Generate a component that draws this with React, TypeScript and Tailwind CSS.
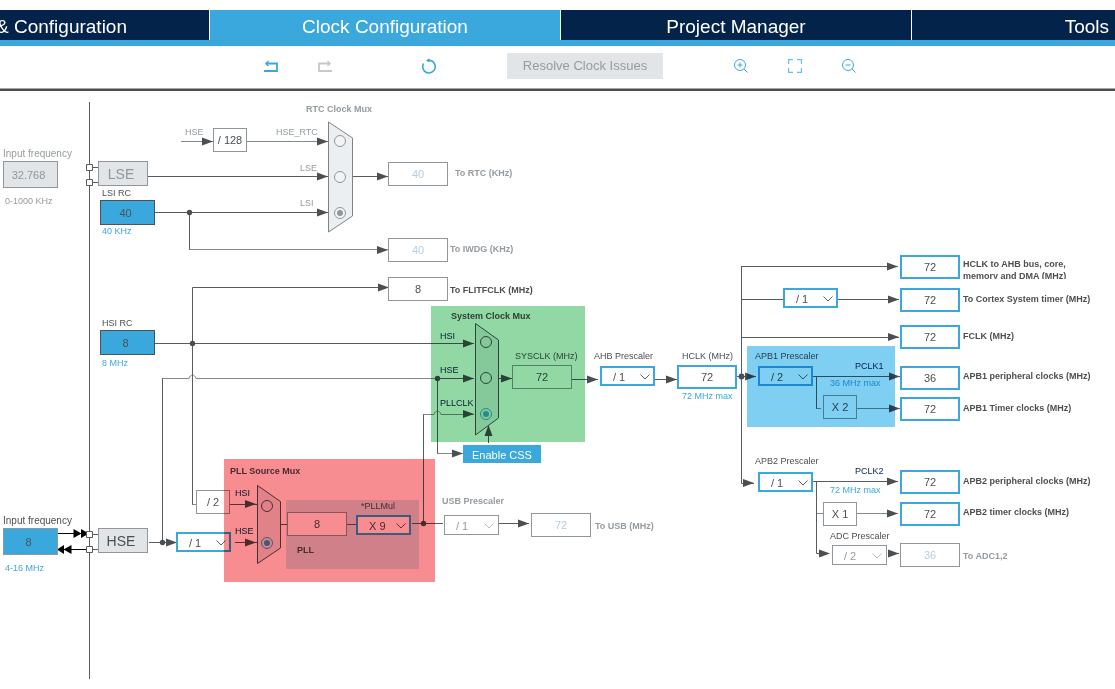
import React from "react";
import clsx from "clsx";

const TONES = {
  dark: "text-[#4b4f52]",
  gray: "text-[#959b9f]",
  blue: "text-[#3aa8dc]",
  navy: "text-[#03234b]",
};

type Tone = keyof typeof TONES;

function Label({ at, tone = "dark", bold, wide, children }: { at: string; tone?: Tone; bold?: boolean; wide?: boolean; children: React.ReactNode }) {
  return (
    <span className={clsx("absolute whitespace-nowrap leading-3", wide ? "text-[10px]" : "text-[9px]", bold && "font-bold", TONES[tone], at)}>
      {children}
    </span>
  );
}

const BOX = {
  plain: "border border-[#8f979c] bg-white text-[#4b4f52]",
  faded: "border border-[#8f979c] bg-white text-[#b5cde4]",
  active: "border-2 border-[#3aa8dc] bg-white text-[#4b4f52]",
  source: "border border-[#4b5358] bg-[#3aa8dc] pr-1 text-[#4b5358]",
  entry: "border border-[#8f979c] bg-[#3aa8dc] pr-1 text-[#4b5358]",
  off: "border border-[#8f979c] bg-[#e1e5e8] pr-1 text-[#8f979c]",
};

function Frequency({ at, name, value, kind = "active", size = "h-6 w-[60px]" }: { at: string; name: string; value: string; kind?: keyof typeof BOX; size?: string }) {
  return (
    <input
      type="text"
      aria-label={name}
      defaultValue={value}
      readOnly={kind !== "entry"}
      className={clsx("absolute text-center text-[11px] leading-4 outline-none", size, BOX[kind], at)}
    />
  );
}

function Factor({ at, children }: { at: string; children: React.ReactNode }) {
  return (
    <div className={clsx("absolute flex h-6 w-[34px] items-center justify-center border border-[#8f979c] bg-white text-[11px] text-[#4b4f52]", at)}>
      {children}
    </div>
  );
}

function Prescaler({ at, name, value, off }: { at: string; name: string; value: string; off?: boolean }) {
  return (
    <div className={clsx("absolute h-5 w-[55px]", at)}>
      <select
        aria-label={name}
        disabled={off}
        defaultValue={value}
        className={clsx(
          "block h-full w-full appearance-none bg-white pt-px pb-0 text-[11px] leading-4 opacity-100 outline-none",
          off ? "border border-[#8f979c] pl-[11px] text-[#959b9f]" : "border-2 border-[#3aa8dc] pl-[11px] text-[#4b4f52]",
        )}
      >
        <option>{value}</option>
      </select>
      <svg className="pointer-events-none absolute top-2 right-[5px] h-[6px] w-[10px]" viewBox="0 0 10 6" fill="none" stroke={off ? "#b9bec1" : "#5b6064"}>
        <path d="M0.5 0.5 5 5 9.5 0.5" />
      </svg>
    </div>
  );
}

function Choice({ at, group, name, on, off }: { at: string; group: string; name: string; on?: boolean; off?: boolean }) {
  return (
    <span className={clsx("absolute flex size-3 items-center justify-center", at)}>
      <input
        type="radio"
        name={group}
        aria-label={name}
        defaultChecked={on}
        disabled={off}
        className={clsx(
          "peer absolute inset-0 m-0 appearance-none rounded-full border",
          off ? "border-[#8f979c] bg-[#f3f4f5]" : "border-[#4b5358] checked:border-[#3aa8dc]",
        )}
      />
      <span className={clsx("pointer-events-none relative hidden size-[6px] rounded-full peer-checked:block", off ? "bg-[#8f979c]" : "bg-[#3aa8dc]")} />
    </span>
  );
}

const arrow = (x: number, y: number) => `M${x} ${y}l-11 -4v8z`;

const ARROWS: [number, number][] = [
  [213, 141.5], [328, 141.5], [328, 176.5], [328, 212.5], [388, 176.5], [388, 250], [389, 287.5],
  [474, 343.5], [474, 378.5], [474, 414], [463, 453.5], [512, 378.5], [598, 379.5], [677, 379.5],
  [756, 376.5], [754, 483], [898, 266.5], [899, 299.5], [899, 337], [900, 376.5], [900, 408.5],
  [898, 481.5], [898, 513.5], [830, 553.5], [899, 553.5], [256, 504], [256, 542.5], [177, 542.5], [529, 523.5],
];

const DARK_WIRES = [
  "M89.5 102V679",
  "M148 176.5H328 M155 212.5H328 M189.5 212V249.5 M353 176.5H388",
  "M192.5 504.5V287.5H388 M155 343.5H474",
  "M149 542.5H177 M162.5 542V378.5 M437.5 378V453.5 M423.5 523.5V414.5",
  "M230 504.5H257 M235 542.5H257 M281 524.5H287 M347 524.5H356 M412 523.5H443 M499 523.5H529",
  "M499 378.5H512 M572 379.5H598 M655 379.5H677 M488.5 443V427 M437.5 378.5H474",
  "M737 376.5H756 M741.5 266V483.5H754 M741 266.5H898 M741 299.5H783 M838 299.5H899 M741 337.5H899",
  "M813 376.5H900 M816.5 376V408.5 M813 481.5H898 M816.5 481V553.5H829 M888 553.5H899",
  "M92 534.5H98 M92 549.5H98 M92 167.5H98 M92 182.5H98",
];

const LIGHT_WIRES = [
  "M181 141.5H213 M247 141.5H328 M189 249.5H388",
  "M162 378.5H189C190 374 195 374 196 378.5H438",
  "M423 414.5H434C435 410 440 410 441 414.5H474 M437 453.5H463",
  "M192 504.5H196 M816 408.5H821 M857 408.5H900 M816 513.5H823 M857 513.5H898",
];

function Wires() {
  return (
    <svg className="absolute top-0 left-0 h-[598px] w-[1115px]" viewBox="0 91 1115 598" fill="none" aria-hidden="true">
      <path d={LIGHT_WIRES.join(" ")} stroke="#83898d" />
      <path d={DARK_WIRES.join(" ")} stroke="#585c5f" />
      <path d={ARROWS.map(([x, y]) => arrow(x, y)).join(" ")} fill="#4b4f52" />
      <path d="M488.5 425l-4 11h8z" fill="#4b4f52" />
      <g fill="#4b4f52">
        <circle cx="189.5" cy="212.5" r="2.7" />
        <circle cx="192.5" cy="343.5" r="2.7" />
        <circle cx="162.5" cy="542.5" r="2.7" />
        <circle cx="437.5" cy="378.5" r="2.7" />
        <circle cx="423.5" cy="523.5" r="2.7" />
        <circle cx="741.5" cy="376.5" r="2.9" />
      </g>
      <path d="M58 533.5H88 M58 549.5H88" stroke="#000" />
      <path d="M81.5 533.5l-8 -4.5v9z M89 533.5l-8 -4.5v9z M57 549.5l7 -4.5v9z M63.5 549.5l8 -4.5v9z" fill="#000" />
      <g fill="#fff" stroke="#585c5f">
        <path d="M86.5 164.5h6v6h-6z M86.5 179.5h6v6h-6z M86.5 531.5h6v6h-6z M86.5 546.5h6v6h-6z" />
      </g>
      <path d="M328.5 122 352.5 138V216L328.5 232z" fill="#ebeff2" stroke="#7c8286" />
      <path d="M475.5 323.5 498.5 340V418L475.5 435z" fill="#e8ecef" stroke="#4b5358" />
      <path d="M257.5 485.5 280.5 501.5V548L257.5 563.5z" fill="#e8ecef" stroke="#4b5358" />
    </svg>
  );
}

function ClockTree() {
  return (
    <main className="relative h-[598px]">
      <div className="absolute top-[409px] left-[286px] h-[69px] w-[133px] bg-[#d6e8f0]" />
      <Wires />

      <Label at="left-[3px] top-[57px]" tone="gray" wide>Input frequency</Label>
      <Frequency at="left-[3px] top-[70px]" name="LSE input frequency" value="32.768" kind="off" size="h-[27px] w-[55px]" />
      <Label at="left-[5px] top-[104px]" tone="gray">0-1000 KHz</Label>
      <div className="absolute top-[70px] left-[98px] flex h-[25px] w-[50px] items-center justify-center border border-[#8f979c] bg-[#e1e5e8] pr-1 text-sm text-[#8f979c]">LSE</div>
      <Label at="left-[102px] top-[96px]">LSI RC</Label>
      <Frequency at="left-[100px] top-[109px]" name="LSI RC" value="40" kind="source" size="h-[25px] w-[55px]" />
      <Label at="left-[102px] top-[134px]" tone="blue">40 KHz</Label>
      <Label at="left-[102px] top-[226px]">HSI RC</Label>
      <Frequency at="left-[100px] top-[239px]" name="HSI RC" value="8" kind="source" size="h-[25px] w-[55px]" />
      <Label at="left-[102px] top-[266px]" tone="blue">8 MHz</Label>
      <Label at="left-[3px] top-[424px]" wide>Input frequency</Label>
      <Frequency at="left-[3px] top-[437px]" name="HSE input frequency" value="8" kind="entry" size="h-[27px] w-[55px]" />
      <Label at="left-[5px] top-[471px]" tone="blue">4-16 MHz</Label>
      <div className="absolute top-[437px] left-[98px] flex h-[25px] w-[50px] items-center justify-center border border-[#8f979c] bg-[#e1e5e8] pr-1 text-sm text-[#4b4f52]">HSE</div>

      <Label at="left-[185px] top-[35px]" tone="gray">HSE</Label>
      <Factor at="left-[213px] top-[37px]">/ 128</Factor>
      <Label at="left-[276px] top-[35px]" tone="gray">HSE_RTC</Label>
      <Label at="left-[300px] top-[71px]" tone="gray">LSE</Label>
      <Label at="left-[300px] top-[106px]" tone="gray">LSI</Label>
      <Label at="left-[306px] top-[12px]" tone="gray" bold>RTC Clock Mux</Label>
      <Choice at="left-[334px] top-[44px]" group="rtc" name="RTC from HSE_RTC" off />
      <Choice at="left-[334px] top-[80px]" group="rtc" name="RTC from LSE" off />
      <Choice at="left-[334px] top-[116px]" group="rtc" name="RTC from LSI" off on />
      <Frequency at="left-[388px] top-[71px]" name="To RTC" value="40" kind="faded" />
      <Label at="left-[455px] top-[76px]" tone="gray" bold>To RTC (KHz)</Label>
      <Frequency at="left-[388px] top-[147px]" name="To IWDG" value="40" kind="faded" />
      <Label at="left-[450px] top-[152px]" tone="gray" bold>To IWDG (KHz)</Label>
      <Frequency at="left-[388px] top-[186px]" name="To FLITFCLK" value="8" kind="plain" />
      <Label at="left-[450px] top-[193px]" bold>To FLITFCLK (MHz)</Label>

      <Label at="left-[451px] top-[219px]" bold>System Clock Mux</Label>
      <Label at="left-[440px] top-[239px]" tone="navy">HSI</Label>
      <Label at="left-[440px] top-[273px]" tone="navy">HSE</Label>
      <Label at="left-[440px] top-[306px]" tone="navy">PLLCLK</Label>
      <Choice at="left-[480px] top-[245px]" group="system" name="System clock from HSI" />
      <Choice at="left-[480px] top-[281px]" group="system" name="System clock from HSE" />
      <Choice at="left-[480px] top-[317px]" group="system" name="System clock from PLLCLK" on />
      <Label at="left-[515px] top-[259px]">SYSCLK (MHz)</Label>
      <Frequency at="left-[512px] top-[274px]" name="SYSCLK" value="72" kind="plain" />
      <button type="button" className="absolute top-[354px] left-[463px] h-[18px] w-[78px] bg-[#3aa8dc] pt-[2px] text-[11px] leading-4 text-white">Enable CSS</button>

      <Label at="left-[594px] top-[259px]">AHB Prescaler</Label>
      <Prescaler at="left-[600px] top-[275px]" name="AHB Prescaler" value="/ 1" />
      <Label at="left-[682px] top-[259px]">HCLK (MHz)</Label>
      <Frequency at="left-[677px] top-[274px]" name="HCLK" value="72" />
      <Label at="left-[682px] top-[299px]" tone="blue">72 MHz max</Label>

      <Label at="left-[230px] top-[374px]" bold>PLL Source Mux</Label>
      <Factor at="left-[196px] top-[399px]">/ 2</Factor>
      <Prescaler at="left-[176px] top-[441px]" name="HSE divider" value="/ 1" />
      <Label at="left-[235px] top-[396px]" tone="navy">HSI</Label>
      <Label at="left-[235px] top-[434px]" tone="navy">HSE</Label>
      <Choice at="left-[261px] top-[409px]" group="pll" name="PLL source HSI" />
      <Choice at="left-[261px] top-[446px]" group="pll" name="PLL source HSE" on />
      <Frequency at="left-[287px] top-[421px]" name="PLL input" value="8" kind="plain" />
      <Label at="left-[361px] top-[409px]">*PLLMul</Label>
      <Prescaler at="left-[356px] top-[424px]" name="PLLMul" value="X 9" />
      <Label at="left-[297px] top-[453px]" bold>PLL</Label>

      <Label at="left-[442px] top-[404px]" tone="gray" bold>USB Prescaler</Label>
      <Prescaler at="left-[444px] top-[424px]" name="USB Prescaler" value="/ 1" off />
      <Frequency at="left-[531px] top-[422px]" name="To USB" value="72" kind="faded" />
      <Label at="left-[595px] top-[429px]" tone="gray" bold>To USB (MHz)</Label>

      <Prescaler at="left-[783px] top-[197px]" name="Cortex System timer prescaler" value="/ 1" />
      <Label at="left-[755px] top-[259px]">APB1 Prescaler</Label>
      <Prescaler at="left-[758px] top-[275px]" name="APB1 Prescaler" value="/ 2" />
      <Label at="left-[855px] top-[269px]" tone="navy">PCLK1</Label>
      <Label at="left-[830px] top-[286px]" tone="blue">36 MHz max</Label>
      <Factor at="left-[823px] top-[304px]">X 2</Factor>
      <Label at="left-[755px] top-[364px]">APB2 Prescaler</Label>
      <Prescaler at="left-[758px] top-[381px]" name="APB2 Prescaler" value="/ 1" />
      <Label at="left-[855px] top-[374px]" tone="navy">PCLK2</Label>
      <Label at="left-[830px] top-[393px]" tone="blue">72 MHz max</Label>
      <Factor at="left-[823px] top-[411px]">X 1</Factor>
      <Label at="left-[830px] top-[439px]">ADC Prescaler</Label>
      <Prescaler at="left-[832px] top-[454px]" name="ADC Prescaler" value="/ 2" off />

      <Frequency at="left-[900px] top-[164px]" name="HCLK to AHB bus" value="72" />
      <Label at="left-[963px] top-[167px] h-[21px] overflow-hidden" bold>
        HCLK to AHB bus, core,
        <br />
        memory and DMA (MHz)
      </Label>
      <Frequency at="left-[900px] top-[197px]" name="To Cortex System timer" value="72" />
      <Label at="left-[963px] top-[202px]" bold>To Cortex System timer (MHz)</Label>
      <Frequency at="left-[900px] top-[234px]" name="FCLK" value="72" />
      <Label at="left-[963px] top-[239px]" bold>FCLK (MHz)</Label>
      <Frequency at="left-[900px] top-[275px]" name="APB1 peripheral clocks" value="36" />
      <Label at="left-[963px] top-[279px]" bold>APB1 peripheral clocks (MHz)</Label>
      <Frequency at="left-[900px] top-[306px]" name="APB1 Timer clocks" value="72" />
      <Label at="left-[963px] top-[311px]" bold>APB1 Timer clocks (MHz)</Label>
      <Frequency at="left-[900px] top-[379px]" name="APB2 peripheral clocks" value="72" />
      <Label at="left-[963px] top-[384px]" bold>APB2 peripheral clocks (MHz)</Label>
      <Frequency at="left-[900px] top-[411px]" name="APB2 timer clocks" value="72" />
      <Label at="left-[963px] top-[415px]" bold>APB2 timer clocks (MHz)</Label>
      <Frequency at="left-[900px] top-[452px]" name="To ADC1,2" value="36" kind="faded" />
      <Label at="left-[963px] top-[459px]" tone="gray" bold>To ADC1,2</Label>

      <div className="pointer-events-none absolute top-[215px] left-[431px] h-[136px] w-[154px] bg-[#92d8a4] mix-blend-multiply" />
      <div className="pointer-events-none absolute top-[368px] left-[224px] h-[123px] w-[211px] bg-[#f78d91] mix-blend-multiply" />
      <div className="pointer-events-none absolute top-[255px] left-[747px] h-[81px] w-[148px] bg-[#7fcff3] mix-blend-multiply" />
    </main>
  );
}

function Tool({ name, className, children }: { name: string; className: string; children: React.ReactNode }) {
  return (
    <button type="button" aria-label={name} className={clsx("size-[14px] shrink-0", className)}>
      <svg viewBox="0 0 14 14" className="size-full overflow-visible" fill="none" stroke="currentColor" aria-hidden="true">
        {children}
      </svg>
    </button>
  );
}

export default function App() {
  return (
    <div className="min-h-screen overflow-hidden bg-white font-['Liberation_Sans',Arial,sans-serif]">
      <nav className="mt-[10px] grid grid-cols-[minmax(0,209fr)_minmax(0,350fr)_minmax(0,350fr)_minmax(0,203fr)] gap-x-px border-b-[6px] border-[#3aa8dc] text-[19px] leading-[30px] text-white">
        <a href="#pinout" className="flex h-[30px] items-center justify-end bg-[#03234b] pt-[3px] pr-[82px] whitespace-nowrap">&amp; Configuration</a>
        <a href="#clock" aria-current="page" className="flex h-[30px] items-center justify-center bg-[#3aa8dc] pt-[3px] whitespace-nowrap">Clock Configuration</a>
        <a href="#project" className="flex h-[30px] items-center justify-center bg-[#03234b] pt-[3px] whitespace-nowrap">Project Manager</a>
        <a href="#tools" className="flex h-[30px] items-center justify-end bg-[#03234b] pt-[3px] pr-[6px]">Tools</a>
      </nav>
      <div className="flex h-[42px] items-center justify-center pb-[2px] pl-[5px]">
        <Tool name="Undo" className="mr-10 text-[#3aa8dc]">
          <path strokeWidth="1.8" d="M0 12H13V4.5H2" />
          <path strokeWidth="1.4" d="M4.5 2 2 4.5 4.5 7" />
        </Tool>
        <Tool name="Redo" className="mr-[90px] text-[#c6c8ca]">
          <path strokeWidth="1.8" d="M14 12H1V4.5H12" />
          <path strokeWidth="1.4" d="M9.500 2 12 4.5 9.500 7" />
        </Tool>
        <Tool name="Reset" className="mr-[71px] text-[#3aa8dc]">
          <path strokeWidth="1.6" d="M1.5 4.5A6.3 6.3 0 1 0 8 1.4H5.500" />
          <path stroke="none" fill="currentColor" d="M4 1.4 7.500 -0.8V3.600z" />
        </Tool>
        <button type="button" disabled className="h-[26px] w-[156px] shrink-0 bg-[#e1e5e8] text-[13px] text-[#959b9f]">Resolve Clock Issues</button>
        <Tool name="Zoom in" className="mr-10 ml-[71px] text-[#3aa8dc]">
          <circle cx="6" cy="6" r="5.5" />
          <path d="M10 10 13.5 13.5M3.5 6H8.5M6 3.5V8.5" />
        </Tool>
        <Tool name="Fit to window" className="mr-10 text-[#6dbfe6]">
          <path strokeWidth="1.2" d="M0.6 5V0.6H5M9 0.6H13.4V5M13.4 9V13.4H9M5 13.4H0.6V9" />
        </Tool>
        <Tool name="Zoom out" className="text-[#3aa8dc]">
          <circle cx="6" cy="6" r="5.5" />
          <path d="M10 10 13.5 13.5M3.5 6H8.5" />
        </Tool>
      </div>
      <div className="h-[3px] border-t border-[#a3a8ab] bg-[#4b4f52]" />
      <ClockTree />
    </div>
  );
}
